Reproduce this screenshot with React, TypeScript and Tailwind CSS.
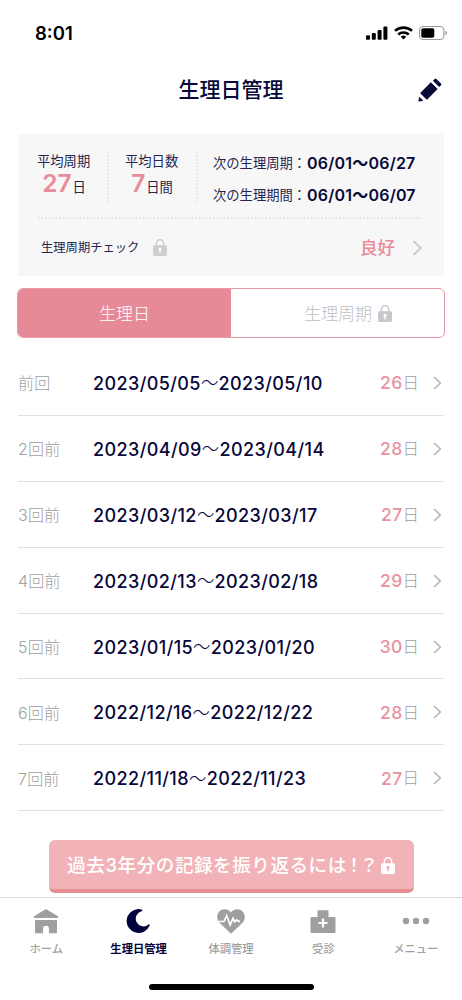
import { clsx } from "clsx";

const records = [
    { label: "前回", from: "2023/05/05", to: "2023/05/10", days: 26 },
    { label: "2回前", from: "2023/04/09", to: "2023/04/14", days: 28 },
    { label: "3回前", from: "2023/03/12", to: "2023/03/17", days: 27 },
    { label: "4回前", from: "2023/02/13", to: "2023/02/18", days: 29 },
    { label: "5回前", from: "2023/01/15", to: "2023/01/20", days: 30 },
    { label: "6回前", from: "2022/12/16", to: "2022/12/22", days: 28 },
    { label: "7回前", from: "2022/11/18", to: "2022/11/23", days: 27 },
];

function LockIcon({ className, hole }: { className?: string; hole: string }) {
    return (
        <svg viewBox="0 0 14 17" className={clsx("h-[17px] w-[14px] shrink-0", className)}>
            <path d="M3.3 7.5V4.4a3.7 3.7 0 0 1 7.4 0v3.1" fill="none" stroke="currentColor" strokeWidth="1.4"/>
            <rect x="0" y="6.2" width="14" height="10.8" rx="1.4" fill="currentColor"/>
            <path d="M7 8.8a1.6 1.6 0 0 1 .8 3v2.4H6.2v-2.4a1.6 1.6 0 0 1 .8-3z" fill={hole}/>
        </svg>
    );
}

function Chevron({ className }: { className?: string }) {
    return (
        <svg viewBox="0 0 9 14" className={className} fill="none" stroke="currentColor" strokeWidth="1.7">
            <path d="M1 1l6.3 6L1 13"/>
        </svg>
    );
}

// fine dotted rule, one dot every 3.5px
function DottedLine({ vertical }: { vertical?: boolean }) {
    return vertical ? (
        <svg className="h-[51px] w-[2px] shrink-0">
            <line x1="1" y1="0" x2="1" y2="51" stroke="#d9d9d9" strokeWidth="1.3" strokeDasharray="1.4 2.1"/>
        </svg>
    ) : (
        <svg className="block h-[2px] w-full">
            <line x1="1" y1="1" x2="384" y2="1" stroke="#d9d9d9" strokeWidth="1.3" strokeDasharray="1.4 2.1"/>
        </svg>
    );
}

function StatusBar() {
    return (
        <div className="flex h-[66px] items-center justify-between pl-[35px] pr-[14px] text-black">
            <span className="text-[18.5px] leading-5 font-semibold">8:01</span>
            <div className="flex items-center">
                <svg viewBox="0 0 22 14" className="h-[14px] w-[22px]" fill="currentColor">
                    <rect x="0" y="9.3" width="4" height="4.4" rx="1"/>
                    <rect x="5.8" y="7" width="4" height="6.7" rx="1"/>
                    <rect x="11.6" y="4" width="4" height="9.7" rx="1"/>
                    <rect x="17.4" y="0.5" width="4" height="13.2" rx="1"/>
                </svg>
                <svg viewBox="0 0 20 14" className="ml-[6px] h-[14px] w-[20px]" fill="none" stroke="currentColor" strokeWidth="2.6">
                    <path d="M1 4.9a12.7 12.7 0 0 1 17 0"/>
                    <path d="M4.2 8.5a8 8 0 0 1 10.6 0"/>
                    <path d="M9.5 13.6l-2.8-2.8a4 4 0 0 1 5.6 0z" fill="currentColor" stroke="none"/>
                </svg>
                <svg viewBox="0 0 29 14" className="ml-[5px] h-[14px] w-[29px]">
                    <rect x="0.6" y="0.5" width="24.3" height="13" rx="3.6" fill="none" stroke="#9b9b9b" strokeWidth="1.1"/>
                    <rect x="2.3" y="2.3" width="13" height="9.4" rx="1.8" fill="#000"/>
                    <path d="M26.4 4.8v4.4c1-.4 1.6-1.2 1.6-2.2s-.6-1.8-1.6-2.2z" fill="#9b9b9b"/>
                </svg>
            </div>
        </div>
    );
}

function Header() {
    return (
        <header className="grid h-[47px] grid-cols-3 items-center px-[20px]">
            <div/>
            <h1 className="text-center text-[21px] leading-6 font-medium whitespace-nowrap">生理日管理</h1>
            <svg viewBox="0 0 24 24" className="h-6 w-6 justify-self-end" fill="currentColor">
                <path d="M16.7 1a1.2 1.2 0 0 1 1.7 0l4.6 4.6a1.2 1.2 0 0 1 0 1.7l-1.8 1.8L14.9 2.8z"/>
                <path d="M12.9 4.3l6.7 6.7L9.5 21.3q-.6.5-1.2 0L2.7 15.7q-.5-.6 0-1.2z"/>
                <path d="M1.3 18.8L5.3 22.7 0.8 23.6Q.3 23.6.4 23.1z"/>
            </svg>
        </header>
    );
}

function Average({ title, value, unit }: { title: string; value: number; unit: string }) {
    return (
        <div className="w-[54px] text-[13.3px] text-[#25254f]">
            <p className="leading-[18px] whitespace-nowrap">{title}</p>
            <p className="flex items-baseline justify-center leading-[26px]">
                <span className="mr-px text-[24.5px] font-semibold text-[#e88b9b]">{value}</span>
                {unit}
            </p>
        </div>
    );
}

function NextRange({ title, range }: { title: string; range: string }) {
    return (
        <p className="flex items-center text-[13.3px] leading-5 text-[#25254f]">
            {title}：<span className="ml-px text-[16px] font-semibold tracking-[0.2px] text-[#07073a]">{range}</span>
        </p>
    );
}

function Summary() {
    return (
        <section className="mx-[18px] mt-[21px] h-[142px] bg-[#f7f7f7] px-[19px] pt-[18px]">
            <div className="flex h-[65px]">
                <Average title="平均周期" value={27} unit="日"/>
                <div className="mr-[16px] ml-[16px] flex"><DottedLine vertical/></div>
                <Average title="平均日数" value={7} unit="日間"/>
                <div className="mr-[15px] ml-[17px] flex"><DottedLine vertical/></div>
                <div className="flex flex-1 flex-col gap-[12px] pt-px whitespace-nowrap">
                    <NextRange title="次の生理周期" range="06/01〜06/27"/>
                    <NextRange title="次の生理期間" range="06/01〜06/07"/>
                </div>
            </div>
            <DottedLine/>
            <div className="flex h-[57px] items-center pl-[4px]">
                <span className="pt-px text-[12.3px] text-[#25254f]">生理周期チェック</span>
                <LockIcon className="ml-[14px] text-[#cdcdd0]" hole="#f7f7f7"/>
                <span className="ml-auto pt-px text-[17.5px] font-medium text-[#e88b9b]">良好</span>
                <Chevron className="mr-[2px] ml-[17px] h-4 w-[11px] text-[#c8c8cc]"/>
            </div>
        </section>
    );
}

function Tabs() {
    return (
        <div className="mx-[17px] mt-[12px] flex h-[50px] overflow-hidden rounded-[6px] border-[1.5px] border-[#ea9aa6] text-[17px]">
            <button type="button" className="w-[213px] bg-[#e68a98] pt-[3px] font-light text-white">生理日</button>
            <button type="button" className="flex flex-1 items-center justify-center gap-[6px] pl-[21px] font-light text-[#bfbfc3]">
                <span className="pt-[3px]">生理周期</span>
                <LockIcon hole="#fff" className="text-[#c8c8cc]"/>
            </button>
        </div>
    );
}

function RecordList() {
    return (
        <ul className="mx-[18px] mt-[12px]">
            {records.map((r) => (
                <li key={r.label} className="flex h-[65.9px] items-center border-b border-[#e2e2e2] pt-px">
                    <span className="w-[75px] pt-px text-[16px] font-light tracking-[0.2px] text-[#a0a0a3]">{r.label}</span>
                    <span className="flex items-center pt-px text-[18px] font-medium tracking-[0.4px] whitespace-nowrap">
                        {r.from}
                        <span className="text-[17.3px] font-light">〜</span>
                        {r.to}
                    </span>
                    <span className="ml-auto flex items-center pt-px text-[16.5px] font-light text-[#a0a0a3]">
                        <span className="text-[17.5px] font-medium tracking-[0.3px] text-[#ea929f]">{r.days}</span>日
                    </span>
                    <Chevron className="mr-[2px] ml-[14px] h-[14px] w-[9px] text-[#b7b7ba]"/>
                </li>
            ))}
        </ul>
    );
}

function NavItem({ label, active, children }: { label: string; active?: boolean; children: React.ReactNode }) {
    return (
        <div className={clsx("flex flex-1 flex-col items-center", active ? "font-bold text-[#00003c]" : "font-medium text-[#9f9f9f]")}>
            <svg viewBox="0 0 30 26" className="mt-[11px] h-[26px] w-[30px]" fill="currentColor">{children}</svg>
            <span className="mt-[6px] text-[11.3px] leading-4 whitespace-nowrap">{label}</span>
        </div>
    );
}

function BottomNav() {
    return (
        <nav className="flex h-[103px] flex-col border-t border-[#d9d9d9] bg-white">
            <div className="flex flex-1">
                <NavItem label="ホーム">
                    <path d="M15 0l12 7.2q1 1.8-.8 1.8H3.8Q2 9 3 7.2z"/>
                    <path d="M4 11h22v12q0 1.2-1.2 1.2H18v-4.4a3 3 0 0 0-6 0v4.4H5.2Q4 24.2 4 23z"/>
                </NavItem>
                <NavItem label="生理日管理" active>
                    <path d="M14.2 0A12 12 0 1 0 25.7 16.6Q26 14.9 24.5 15.5A7.7 7.7 0 1 1 17.6 2.2Q19.4.8 17.6.4A12 12 0 0 0 14.2 0z"/>
                </NavItem>
                <NavItem label="体調管理">
                    <path d="M15 24.8L3 13.3A7.500 7.500 0 0 1 1.200 8C1.200 3.500 4.500.2 8.500.2c2.800 0 5.100 1.200 6.500 3.300C16.400 1.400 18.700.2 21.500.2c4 0 7.300 3.300 7.300 7.800A7.500 7.500 0 0 1 27 13.300z"/>
                    <path d="M2 12.5h6l2.700-6 3.400 9.500L17 9.300l1.700 3.400 1.800-1.900L22.500 12.300h1.500" fill="none" stroke="#fff" strokeWidth="1.700"/>
                </NavItem>
                <NavItem label="受診">
                    <path d="M9.500 1.300h11v6.800h6q1 0 1 1V23q0 1-1 1h-23q-1 0-1-1V9.100q0-1 1-1h6z"/>
                    <path d="M15 9.500v9M10.500 14h9" stroke="#fff" strokeWidth="2.200"/>
                </NavItem>
                <NavItem label="メニュー">
                    <circle cx="5" cy="12" r="3.200"/>
                    <circle cx="15" cy="12" r="3.200"/>
                    <circle cx="25" cy="12" r="3.200"/>
                </NavItem>
            </div>
            <div className="mx-auto mb-[10px] h-[6px] w-[165px] rounded-full bg-black"/>
        </nav>
    );
}

export default function App() {
    return (
        <div className="flex h-[1000px] w-[462px] flex-col overflow-hidden bg-white font-[Inter,'Noto_Sans_CJK_JP',sans-serif] text-[#07073a] antialiased">
            <StatusBar/>
            <Header/>
            <Summary/>
            <Tabs/>
            <RecordList/>
            <button
                type="button"
                className="mx-auto mt-[29px] flex h-[53px] w-[365px] shrink-0 items-center justify-center rounded-[6px] border-b-4 border-[#e58f94] bg-[#f1b3b7] pt-[2px] text-[18.5px] font-medium tracking-[0.6px] whitespace-nowrap text-white"
            >
                <span>過去3年分の記録を振り返るには</span>
                <span className="-ml-[2px] tracking-[-3.5px]">！？</span>
                <LockIcon hole="#f1b3b7" className="ml-[6px]"/>
            </button>
            <div className="mt-auto">
                <BottomNav/>
            </div>
        </div>
    );
}
